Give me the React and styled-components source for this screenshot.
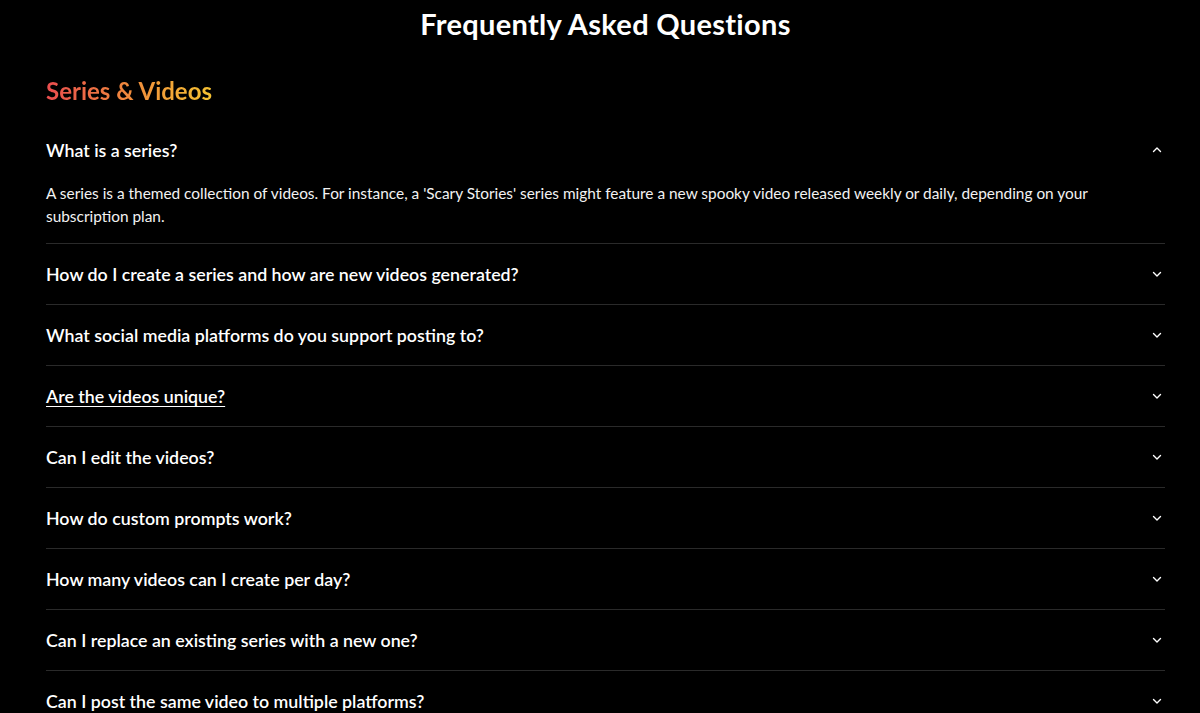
import React from 'react'
import styled, { createGlobalStyle } from 'styled-components'

const GlobalStyle = createGlobalStyle`
  body {
    margin: 0;
    background: #000000;
    color: #ffffff;
    font-family: Lato, "Noto Sans", sans-serif;
  }
`

const FAQS = [
   {
      q: 'What is a series?',
      a: "A series is a themed collection of videos. For instance, a 'Scary Stories' series might feature a new spooky video released weekly or daily, depending on your subscription plan.",
   },
   { q: 'How do I create a series and how are new videos generated?' },
   { q: 'What social media platforms do you support posting to?' },
   { q: 'Are the videos unique?', hover: true },
   { q: 'Can I edit the videos?' },
   { q: 'How do custom prompts work?' },
   { q: 'How many videos can I create per day?' },
   { q: 'Can I replace an existing series with a new one?' },
   { q: 'Can I post the same video to multiple platforms?' },
]

const Chevron = ({ up }) => (
   <svg width="12" height="12" viewBox="0 0 12 12" fill="none">
      <path
         d={up ? 'M2.5 7.5 L6 4 L9.5 7.5' : 'M2.5 4.5 L6 8 L9.5 4.5'}
         stroke="#ffffff"
         strokeWidth="1.4"
         strokeLinecap="round"
         strokeLinejoin="round"
      />
   </svg>
)

const App = () => {
   return (
      <Page>
         <GlobalStyle />
         <Title>Frequently Asked Questions</Title>
         <Section>Series &amp; Videos</Section>
         <List>
            {FAQS.map((item, i) => (
               <Item key={i}>
                  <Question>
                     <QText $hover={item.hover}>{item.q}</QText>
                     <Chevron up={!!item.a} />
                  </Question>
                  {item.a && <Answer>{item.a}</Answer>}
               </Item>
            ))}
         </List>
      </Page>
   )
}

const Page = styled.div`
   padding: 6px 35px 0 46px;
   height: 713px;
   overflow: hidden;
   box-sizing: border-box;
`
const Title = styled.h1`
   margin: 0;
   text-align: center;
   font-size: 29px;
   font-weight: 700;
   line-height: 36px;
   letter-spacing: 0.3px;
`
const Section = styled.h2`
   margin: 34px 0 0;
   font-size: 24px;
   font-weight: 700;
   line-height: 30px;
   display: inline-block;
   background: linear-gradient(90deg, #ea4d4f 0%, #f08a3c 50%, #f5c232 100%);
   -webkit-background-clip: text;
   background-clip: text;
   color: transparent;
`
const List = styled.div`
   display: flex;
   flex-direction: column;
   margin-top: 14px;
`
const Item = styled.div`
   border-bottom: 1px solid #2a2a2a;
`
const Question = styled.div`
   display: flex;
   align-items: center;
   justify-content: space-between;
   height: 60px;
   padding-right: 2px;
`
const QText = styled.span`
   font-size: 17.8px;
   font-weight: 600;
   text-decoration: ${(p) => (p.$hover ? 'underline' : 'none')};
   text-underline-offset: 3px;
`
const Answer = styled.p`
   margin: 0;
   padding: 2px 60px 15px 0;
   font-size: 15.4px;
   line-height: 23px;
   color: #f2f2f2;
`

export default App
